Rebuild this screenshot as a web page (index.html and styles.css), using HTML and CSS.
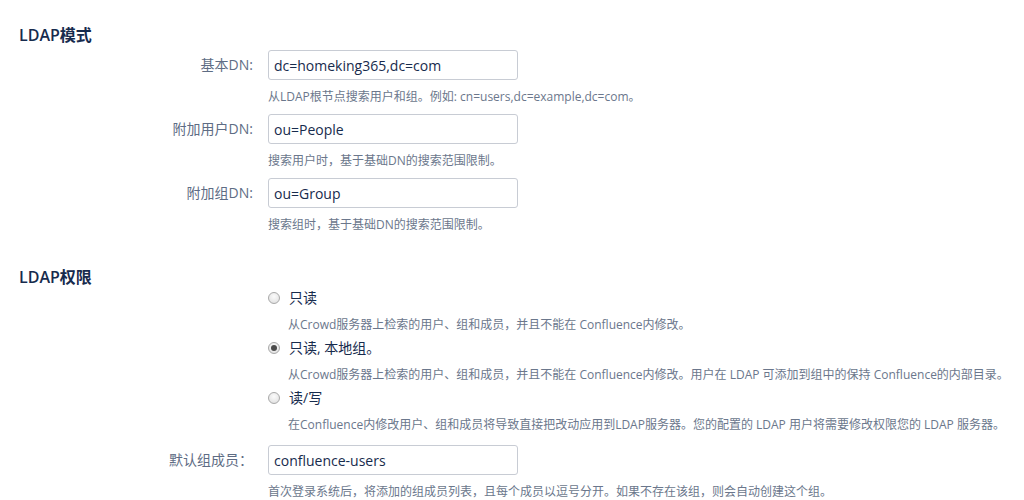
FILE: index.html
```html
<!DOCTYPE html>
<html lang="zh-CN">
<head>
<meta charset="utf-8">
<title>LDAP</title>
<link rel="stylesheet" href="styles.css">
</head>
<body>
<div class="page">
  <section class="section">
    <h2 class="section-title">LDAP模式</h2>
    <div class="field">
      <label class="field-label">基本DN:</label>
      <div class="field-body">
        <input class="text-input" type="text" value="dc=homeking365,dc=com">
        <div class="desc">从LDAP根节点搜索用户和组。例如: cn=users,dc=example,dc=com。</div>
      </div>
    </div>
    <div class="field">
      <label class="field-label">附加用户DN:</label>
      <div class="field-body">
        <input class="text-input" type="text" value="ou=People">
        <div class="desc">搜索用户时，基于基础DN的搜索范围限制。</div>
      </div>
    </div>
    <div class="field">
      <label class="field-label">附加组DN:</label>
      <div class="field-body">
        <input class="text-input" type="text" value="ou=Group">
        <div class="desc">搜索组时，基于基础DN的搜索范围限制。</div>
      </div>
    </div>
  </section>

  <section class="section section-perm">
    <h2 class="section-title">LDAP权限</h2>
    <div class="field">
      <div class="field-label"></div>
      <div class="field-body radios">
        <div class="radio-item">
          <div class="radio-line"><span class="radio"></span><span class="radio-text">只读</span></div>
          <div class="desc radio-desc">从Crowd服务器上检索的用户、组和成员，并且不能在 Confluence内修改。</div>
        </div>
        <div class="radio-item">
          <div class="radio-line"><span class="radio checked"></span><span class="radio-text">只读, 本地组。</span></div>
          <div class="desc radio-desc">从Crowd服务器上检索的用户、组和成员，并且不能在 Confluence内修改。用户在 LDAP 可添加到组中的保持 Confluence的内部目录。</div>
        </div>
        <div class="radio-item">
          <div class="radio-line"><span class="radio"></span><span class="radio-text">读/写</span></div>
          <div class="desc radio-desc">在Confluence内修改用户、组和成员将导致直接把改动应用到LDAP服务器。您的配置的 LDAP 用户将需要修改权限您的 LDAP 服务器。</div>
        </div>
      </div>
    </div>
    <div class="field">
      <label class="field-label">默认组成员：</label>
      <div class="field-body">
        <input class="text-input" type="text" value="confluence-users">
        <div class="desc">首次登录系统后，将添加的组成员列表，且每个成员以逗号分开。如果不存在该组，则会自动创建这个组。</div>
      </div>
    </div>
  </section>
</div>
</body>
</html>
```

FILE: styles.css
```css
html, body {
  margin: 0;
  padding: 0;
  background: #ffffff;
}

body {
  font-family: "Open Sans", "Noto Sans CJK SC", sans-serif;
  color: #172b4d;
}

.page {
  padding: 23px 0 0 19px;
}

.section-title {
  margin: 0 0 3px 0;
  font-size: 16px;
  line-height: 24px;
  font-weight: 600;
  color: #172b4d;
}

.section-perm {
  margin-top: 30px;
}

.section-perm .section-title {
  margin-bottom: 0;
}

.field {
  display: flex;
  margin-bottom: 7px;
}

.field-label {
  width: 234px;
  padding-right: 15px;
  text-align: right;
  font-size: 14px;
  line-height: 30px;
  color: #5e6c84;
  flex-shrink: 0;
}

.field-body {
  display: flex;
  flex-direction: column;
}

.text-input {
  box-sizing: border-box;
  width: 250px;
  height: 30px;
  margin: 0;
  padding: 0 5px;
  border: 1px solid #c8ccd4;
  border-radius: 3px;
  font-family: "Open Sans", "Noto Sans CJK SC", sans-serif;
  font-size: 14px;
  color: #172b4d;
  background: #fff;
}

.desc {
  margin-top: 7px;
  font-size: 12px;
  line-height: 20px;
  color: #6b778c;
  white-space: nowrap;
}

.radios {
  margin-top: -1px;
}

.radio-item {
  display: flex;
  flex-direction: column;
}

.radio-line {
  display: flex;
  align-items: center;
  height: 20px;
}

.radio {
  box-sizing: border-box;
  width: 12px;
  height: 12px;
  border-radius: 50%;
  border: 1px solid #a9a9a9;
  background: radial-gradient(circle at 50% 35%, #fbfbfb 0%, #e6e6e6 70%, #d4d4d4 100%);
  margin-right: 9px;
  position: relative;
  flex-shrink: 0;
}

.radio.checked::after {
  content: "";
  position: absolute;
  left: 2px;
  top: 2px;
  width: 6px;
  height: 6px;
  border-radius: 50%;
  background: #4a4a4a;
}

.radio-text {
  font-size: 14px;
  line-height: 20px;
  color: #172b4d;
}

.radio-desc {
  margin-top: 7px;
  margin-bottom: 3px;
  padding-left: 20px;
}
```
